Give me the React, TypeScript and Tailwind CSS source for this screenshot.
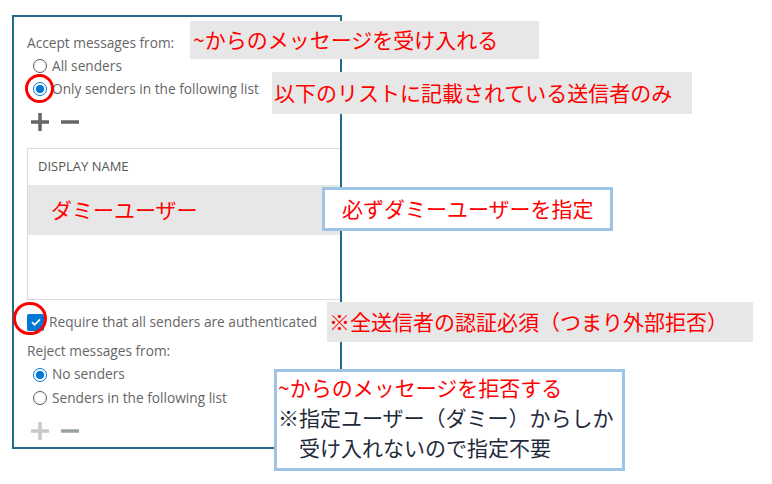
import React from 'react';

const jp = { fontFamily: '"Noto Sans CJK JP", "Noto Sans", sans-serif' };

// radio button as seen in the admin center
const Radio = ({ checked, label }: { checked?: boolean; label: string }) => (
  <div className="flex items-center h-full pl-[6px] gap-[5px]">
    {checked ? (
      <span className="w-[14px] h-[14px] rounded-full border-[1.5px] border-[#0078d4] flex items-center justify-center bg-white">
        <span className="w-[8px] h-[8px] rounded-full bg-[#0078d4]" />
      </span>
    ) : (
      <span className="w-[14px] h-[14px] rounded-full border border-[#555] bg-white" />
    )}
    <span>{label}</span>
  </div>
);

const PlusMinus = ({ faded }: { faded?: boolean }) => (
  <div className="flex items-center h-full pl-[3px] gap-[11px]">
    <svg width="20" height="20" viewBox="0 0 20 20">
      <path d="M10 1v18M1 10h18" stroke={faded ? '#c8c8c8' : '#666'} strokeWidth="3.5" />
    </svg>
    <svg width="18" height="20" viewBox="0 0 18 20">
      <path d="M0 10h18" stroke={faded ? '#9aa0a4' : '#666'} strokeWidth="3.5" />
    </svg>
  </div>
);

export default function App() {
  return (
    <div
      className="relative w-[772px] h-[484px] bg-white overflow-hidden text-[13.7px] text-[#666]"
      style={{ fontFamily: '"Open Sans", "Noto Sans", sans-serif' }}
    >
      {/* Settings panel */}
      <div className="ml-[12px] mt-[15px] w-[330px] border-2 border-[#246b8b] pl-[13px] pt-[14px] pb-[2px]">
        <div className="h-[24px] flex items-center">Accept messages from:</div>
        <div className="h-[22px]">
          <Radio label="All senders" />
        </div>
        <div className="h-[24px]">
          <Radio checked label="Only senders in the following list" />
        </div>
        <div className="h-[28px] mt-[7px]">
          <PlusMinus />
        </div>

        {/* Display name list */}
        <div className="mt-[12px] h-[152px] border border-[#dcdcdc] border-r-0 flex flex-col">
          <div className="h-[36px] flex items-center pl-[10px] text-[13px] text-[#555]">DISPLAY NAME</div>
          <div className="h-[50px] bg-[#e7e7e7] flex items-center pl-[23px] text-[21px] text-[#ff0000]" style={jp}>
            ダミーユーザー
          </div>
        </div>

        <div className="h-[24px] mt-[10px] flex items-center gap-[5px]">
          <span className="w-[17px] h-[17px] rounded-[2px] bg-[#0078d4] flex items-center justify-center">
            <svg width="12" height="12" viewBox="0 0 12 12">
              <path d="M2 6.2l2.6 2.6L10 3.4" stroke="#fff" strokeWidth="1.8" fill="none" />
            </svg>
          </span>
          <span>Require that all senders are authenticated</span>
        </div>
        <div className="h-[23px] mt-[6px] flex items-center">Reject messages from:</div>
        <div className="h-[23px]">
          <Radio checked label="No senders" />
        </div>
        <div className="h-[24px]">
          <Radio label="Senders in the following list" />
        </div>
        <div className="h-[28px] mt-[7px]">
          <PlusMinus faded />
        </div>
      </div>

      {/* red highlight circles */}
      <span className="absolute left-[25px] top-[74px] w-[29px] h-[29px] rounded-full border-[3px] border-[#ff0000]" />
      <span className="absolute left-[13px] top-[302px] w-[34px] h-[33px] rounded-full border-[3px] border-[#ff0000]" />

      {/* callouts */}
      <div
        className="absolute left-[190px] top-[21px] w-[349px] h-[38px] bg-[#e7e7e7] flex items-center pl-[3px] text-[21px] text-[#ff0000]"
        style={jp}
      >
        ~からのメッセージを受け入れる
      </div>
      <div
        className="absolute left-[272px] top-[72px] w-[420px] h-[42px] bg-[#e7e7e7] flex items-center pl-[2px] text-[21px] text-[#ff0000]"
        style={jp}
      >
        以下のリストに記載されている送信者のみ
      </div>
      <div
        className="absolute left-[322px] top-[187px] w-[291px] h-[44px] bg-white border-[3px] border-[#9dc3e6] flex items-center pl-[17px] text-[21px] text-[#ff0000]"
        style={jp}
      >
        必ずダミーユーザーを指定
      </div>
      <div
        className="absolute left-[327px] top-[302px] w-[426px] h-[40px] bg-[#e7e7e7] flex items-center pl-[2px] text-[21px] text-[#ff0000]"
        style={jp}
      >
        ※全送信者の認証必須（つまり外部拒否）
      </div>
      <div
        className="absolute left-[274px] top-[369px] w-[351px] h-[102px] bg-white border-[3px] border-[#9dc3e6] pl-[1px] text-[21px] leading-[30px] text-[#1e2a3a]"
        style={jp}
      >
        <div className="text-[#ff0000]">~からのメッセージを拒否する</div>
        <div>※指定ユーザー（ダミー）からしか</div>
        <div>　受け入れないので指定不要</div>
      </div>
    </div>
  );
}
